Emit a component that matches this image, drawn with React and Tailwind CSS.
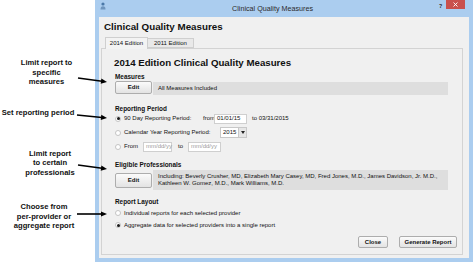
import React from "react";

function Arrow({ x1, y1, x2, y2, className }) {
  const dx = x2 - x1;
  const dy = y2 - y1;
  const len = Math.sqrt(dx * dx + dy * dy);
  const ux = dx / len;
  const uy = dy / len;
  const hl = 6;
  const hw = 2.6;
  const bx = x2 - ux * hl;
  const by = y2 - uy * hl;
  const p1 = `${x2},${y2}`;
  const p2 = `${bx - uy * hw},${by + ux * hw}`;
  const p3 = `${bx + uy * hw},${by - ux * hw}`;
  return (
    <svg className={className} width="36" height="14" viewBox="0 0 36 14">
      <line x1={x1} y1={y1} x2={bx + ux} y2={by + uy} stroke="#000" strokeWidth="1.6" />
      <polygon points={`${p1} ${p2} ${p3}`} fill="#000" />
    </svg>
  );
}

function Annotations() {
  return (
    <div className="w-[95px] shrink-0 flex flex-col font-bold text-[7.6px] leading-[9.5px] text-[#111] font-['Liberation_Sans',Arial,sans-serif]">
      <div className="relative mt-[58px] h-[29px] w-[93px] text-center">
        <div>Limit report to</div>
        <div>specific</div>
        <div>measures</div>
        <Arrow className="absolute left-[76px] top-[14px] z-10" x1={2} y1={6} x2={31} y2={10} />
      </div>
      <div className="relative mt-[21px] h-[9.5px] w-[76px] text-center">
        <div>Set reporting period</div>
        <Arrow className="absolute left-[76px] top-[1px] z-10" x1={1} y1={6} x2={31} y2={9} />
      </div>
      <div className="relative mt-[31px] h-[28.5px] w-[100px] text-center">
        <div>Limit report</div>
        <div>to certain</div>
        <div>professionals</div>
        <Arrow className="absolute left-[76px] top-[11px] z-10" x1={2} y1={5} x2={31} y2={9} />
      </div>
      <div className="relative mt-[25px] h-[28.5px] w-[88px] text-center">
        <div>Choose from</div>
        <div>per-provider or</div>
        <div>aggregate report</div>
        <Arrow className="absolute left-[76px] top-[5px] z-10" x1={1} y1={7} x2={31} y2={7} />
      </div>
    </div>
  );
}

function Radio({ checked }) {
  return (
    <div className="w-[6px] h-[6px] rounded-full border border-[#c4c4c4] bg-white flex items-center justify-center shrink-0">
      {checked && <div className="w-[3px] h-[3px] rounded-full bg-[#1a1a1a]" />}
    </div>
  );
}

function Btn({ children, className }) {
  return (
    <div
      className={
        "flex items-center justify-center border border-[#adadad] rounded-[2px] bg-gradient-to-b from-[#fbfbfb] to-[#e3e3e3] font-bold text-[6px] text-[#111] " +
        (className || "")
      }
    >
      {children}
    </div>
  );
}

function Input({ children, className, placeholder }) {
  return (
    <div
      className={
        "h-[10px] bg-white border border-[#cfcfcf] flex items-center px-[2px] text-[6px] " +
        (placeholder ? "text-[#9a9a9a] " : "text-[#111] ") +
        (className || "")
      }
    >
      {children}
    </div>
  );
}

function Window() {
  return (
    <div className="w-[378px] h-[262px] shrink-0 bg-[#abcdef] flex flex-col">
      {/* title bar */}
      <div className="h-[17px] shrink-0 flex items-start relative">
        <svg className="ml-[5px] mt-[2px]" width="6" height="8" viewBox="0 0 6 8">
          <circle cx="3" cy="2" r="1.6" fill="#4a78a8" />
          <path d="M0.5 7.5 Q0.5 4.2 3 4.2 Q5.5 4.2 5.5 7.5 Z" fill="#6f95bd" />
        </svg>
        <div className="flex-1 text-center text-[7.2px] leading-[17px] text-[#2b2b2b] font-['Liberation_Sans',Arial,sans-serif]">
          Clinical Quality Measures
        </div>
        <div className="text-[6px] font-bold leading-[6px] mt-[3px] mr-[4px] text-[#333]">?</div>
        <div className="w-[19px] h-[9px] bg-[#c9504d] flex items-center justify-center mr-[8px]">
          <svg width="5" height="5" viewBox="0 0 5 5">
            <path d="M0.5 0.5 L4.5 4.5 M4.5 0.5 L0.5 4.5" stroke="#fff" strokeWidth="0.9" />
          </svg>
        </div>
      </div>
      {/* body */}
      <div className="mx-[4px] mb-[4px] flex-1 bg-[#f0f0f0] flex flex-col font-['Liberation_Sans',Arial,sans-serif] text-[#111]">
        <div className="pl-[5px] mt-[3px] h-[14px] text-[9.8px] font-bold leading-[14px]">Clinical Quality Measures</div>
        {/* tabs */}
        <div className="mt-[3px] h-[12px] flex items-end pl-[6px] relative z-10">
          <div className="h-[12px] w-[43px] border border-[#cfcfcf] border-b-0 bg-[#f3f3f3] text-[6px] flex items-center justify-center">
            2014 Edition
          </div>
          <div className="h-[10px] w-[46px] border border-[#cfcfcf] border-l-0 bg-[#e9e9e9] text-[6px] flex items-center justify-center mb-[1px]">
            2011 Edition
          </div>
        </div>
        {/* panel */}
        <div className="ml-[2px] mr-[6px] -mt-[1px] mb-[3px] flex-1 border border-[#d3d3d3] flex flex-col pl-[13px]">
          <div className="mt-[7px] -ml-[1px] h-[14px] text-[9.7px] font-bold leading-[14px]">
            2014 Edition Clinical Quality Measures
          </div>
          <div className="mt-[3px] h-[8px] text-[6.4px] font-bold leading-[8px]">Measures</div>
          <div className="h-[14px] flex items-start">
            <Btn className="w-[37px] h-[13px]">Edit</Btn>
            <div className="ml-[1px] mt-[1px] w-[295px] h-[13px] bg-[#dedede] text-[6px] flex items-center pl-[5px]">
              All Measures Included
            </div>
          </div>
          <div className="mt-[10px] h-[8px] text-[6.4px] font-bold leading-[8px]">Reporting Period</div>
          <div className="h-[11px] flex items-center text-[6px]">
            <Radio checked />
            <span className="ml-[3px] w-[79px]">90 Day Reporting Period:</span>
            <span className="w-[11px]">from</span>
            <Input className="w-[33px]">01/01/15</Input>
            <span className="ml-[5px]">to 03/31/2015</span>
          </div>
          <div className="mt-[3px] h-[11px] flex items-center text-[6px]">
            <Radio />
            <span className="ml-[3px] w-[96px]">Calendar Year Reporting Period:</span>
            <div className="h-[11px] flex border border-[#c8c8c8] bg-white">
              <div className="w-[17px] flex items-center pl-[2px]">2015</div>
              <div className="w-[8px] bg-[#e6e6e6] border-l border-[#c8c8c8] flex items-center justify-center">
                <svg width="4" height="3" viewBox="0 0 4 3">
                  <path d="M0 0 L4 0 L2 3 Z" fill="#222" />
                </svg>
              </div>
            </div>
          </div>
          <div className="mt-[3px] h-[11px] flex items-center text-[6px]">
            <Radio />
            <span className="ml-[3px] w-[19px]">From</span>
            <Input className="w-[29px]" placeholder>mm/dd/yy</Input>
            <span className="ml-[6px] w-[10px]">to</span>
            <Input className="w-[33px]" placeholder>mm/dd/yy</Input>
          </div>
          <div className="mt-[9px] h-[8px] text-[6.4px] font-bold leading-[8px]">Eligible Professionals</div>
          <div className="mt-[1px] h-[20px] flex items-center">
            <Btn className="w-[37px] h-[15px]">Edit</Btn>
            <div className="ml-[1px] w-[295px] h-[20px] bg-[#dedede] text-[6px] leading-[7.5px] flex flex-col justify-center pl-[5px]">
              <div>Including: Beverly Crusher, MD, Elizabeth Mary Casey, MD, Fred Jones, M.D., James Davidson, Jr. M.D.,</div>
              <div>Kathleen W. Gomez, M.D., Mark Williams, M.D.</div>
            </div>
          </div>
          <div className="mt-[8px] h-[8px] text-[6.4px] font-bold leading-[8px]">Report Layout</div>
          <div className="mt-[2px] h-[10px] flex items-center text-[6px]">
            <Radio />
            <span className="ml-[3px]">Individual reports for each selected provider</span>
          </div>
          <div className="mt-[2px] h-[10px] flex items-center text-[6px]">
            <Radio checked />
            <span className="ml-[3px]">Aggregate data for selected providers into a single report</span>
          </div>
          <div className="mt-[6px] h-[12px] flex justify-end pr-[5px] gap-[11px]">
            <Btn className="w-[30px] h-[12px]">Close</Btn>
            <Btn className="w-[58px] h-[12px]">Generate Report</Btn>
          </div>
        </div>
      </div>
    </div>
  );
}

export default function App() {
  return (
    <div className="w-[474px] h-[264px] bg-white flex overflow-hidden">
      <Annotations />
      <Window />
    </div>
  );
}
